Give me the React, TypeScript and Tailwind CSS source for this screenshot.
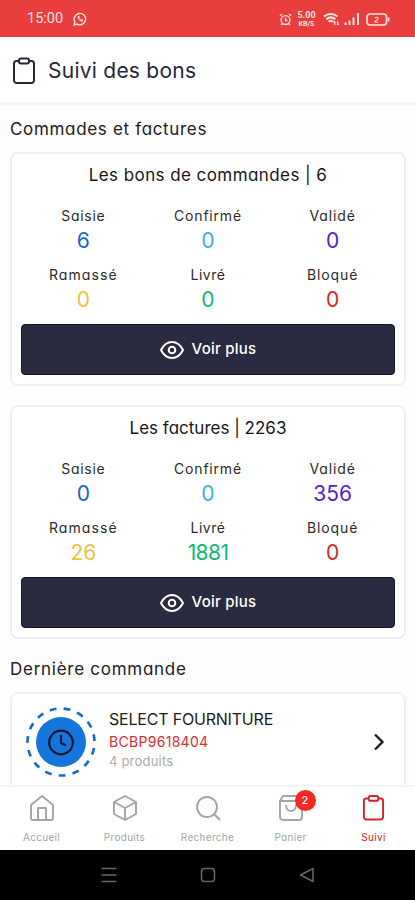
import React from "react";

type Stat = { label: string; value: string; color: string; ls: string };

function Clipboard({ className }: { className: string }) {
  return (
    <svg viewBox="0 0 24 28" fill="none" stroke="currentColor" strokeWidth="2" strokeLinejoin="round" className={className}>
      <path d="M7 4H4.500A2.500 2.500 0 0 0 2 6.500V23.500A2.500 2.500 0 0 0 4.500 26H19.500A2.500 2.500 0 0 0 22 23.500V6.500A2.500 2.500 0 0 0 19.500 4H17" />
      <rect x="7" y="1.500" width="10" height="5" rx="2" />
    </svg>
  );
}

function StatusBar() {
  return (
    <div className="flex h-[37px] shrink-0 items-center bg-[#e93d3e] pl-[27px] pr-[25px] pt-px text-[#ffe3e0]">
      <span className="font-[Roboto] text-[14.500px]">15:00</span>
      <svg viewBox="0 0 16 16" className="ml-[10px] h-[14px] w-[14px]" fill="none" stroke="currentColor" strokeWidth="1.600">
        <path d="M1.200 14.800l1-3.500A6.500 6.500 0 1 1 4.700 13.800z" />
        <path d="M5.600 4.800c-.8 2.200 2.500 6 5.300 5.800l.5-1.500-1.700-.9-.9.800c-.9-.4-1.500-1.100-1.900-1.900l.7-.8-.7-1.600z" fill="currentColor" strokeWidth=".5" />
      </svg>
      <div className="ml-auto flex items-center">
        <svg viewBox="0 0 14 14" className="h-[13px] w-[13px]" fill="none" stroke="currentColor" strokeWidth="1.500">
          <circle cx="7" cy="7.600" r="4.800" />
          <path d="M1 3l2.200-2M13 3l-2.200-2M7 5v3h2M3.500 11.500L2.300 13M10.500 11.500l1.200 1.500" />
        </svg>
        <div className="ml-[5px] flex w-[19px] flex-col items-center font-[Roboto] font-bold">
          <span className="text-[9px] leading-[9px]">5.00</span>
          <span className="text-[7px] leading-[8px]">KB/S</span>
        </div>
        <svg viewBox="0 0 17 14" className="ml-[7px] h-[14px] w-[17px]" fill="none" stroke="currentColor" strokeWidth="2">
          <path d="M1 4.500c4-3.500 9.500-3.500 13.500 0M3.300 7.300c2.700-2.300 6.300-2.300 9 0M5.500 9.800c1.500-1.200 3-1.200 4.500 0" />
          <path d="M11.800 13V9M10.500 10.300L11.800 9M14.500 9v4M15.800 11.700L14.500 13" strokeWidth="1.200" />
        </svg>
        <svg viewBox="0 0 16 12" className="ml-[4px] h-[12px] w-[16px]" fill="currentColor">
          <path d="M.5 9.500h2V12h-2zM4.500 7.500h2V12h-2zM8.500 4.500h2V12h-2zM13 0h2v12h-2z" />
        </svg>
        <svg viewBox="0 0 24 13" className="ml-[6px] h-[13px] w-[24px]" fill="none" stroke="currentColor" strokeWidth="1.700">
          <rect x="1" y="1" width="19.500" height="11" rx="3" />
          <path d="M22.500 4.500v4" strokeWidth="1.800" />
          <path d="M9 5.200c.5-1.500 3-1.200 3 .2C12 6.700 9 7.200 9 9h3.200" strokeWidth="1.100" />
        </svg>
      </div>
    </div>
  );
}

function StatCard({ title, titleClass, stats }: { title: string; titleClass: string; stats: Stat[] }) {
  return (
    <section className="flex h-[234px] shrink-0 flex-col rounded-[8px] border-2 border-[#eeeff0] bg-white px-[9px] pt-[10px]">
      <h3 className={`text-center text-[17px] leading-[22px] text-[#161616] ${titleClass}`}>{title}</h3>
      <div className="mt-[18px] grid grid-cols-3">
        {stats.map((s) => (
          <div key={s.label} className="flex h-[59px] flex-col items-center">
            <span className={`text-[14px] leading-[24px] text-[#2b2b2b] ${s.ls}`}>{s.label}</span>
            <span className={`text-[21px] leading-[26px] ${s.color} ${s.value.length > 3 ? "tracking-[-0.6px]" : ""}`}>{s.value}</span>
          </div>
        ))}
      </div>
      <button className="mt-[2px] flex h-[51px] items-center justify-center gap-[8px] rounded-[4px] border border-[#15152a] bg-[#2a2b41] text-white">
        <svg viewBox="0 0 24 20" className="h-[20px] w-[24px]" fill="none" stroke="currentColor" strokeWidth="2">
          <path d="M1 10C6.500-.7 17.500-.7 23 10C17.500 20.700 6.500 20.700 1 10z" strokeLinejoin="round" />
          <circle cx="12" cy="10" r="3.300" />
        </svg>
        <span className="text-[15px] font-medium tracking-[0.25px]">Voir plus</span>
      </button>
    </section>
  );
}

const makeStats = (v: string[]): Stat[] => [
  { label: "Saisie", value: v[0], color: "text-[#1763d0]", ls: "tracking-[0.7px]" },
  { label: "Confirmé", value: v[1], color: "text-[#3bb2d9]", ls: "tracking-[0.8px]" },
  { label: "Validé", value: v[2], color: "text-[#5520d0]", ls: "tracking-[0.9px]" },
  { label: "Ramassé", value: v[3], color: "text-[#eec23f]", ls: "tracking-[1.1px]" },
  { label: "Livré", value: v[4], color: "text-[#0fb878]", ls: "tracking-[0.5px]" },
  { label: "Bloqué", value: v[5], color: "text-[#d7262c]", ls: "tracking-[0.9px]" },
];

const navIcon = "h-[28px] w-[28px]";

function NavItem({ label, active, children }: { label: string; active?: boolean; children: React.ReactNode }) {
  return (
    <div className={`flex flex-1 flex-col items-center pt-[7px] ${active ? "text-[#d3252b]" : "text-[#a2a5a8]"}`}>
      <div className="relative flex h-[28px] items-center justify-center">{children}</div>
      <span className="mt-[8px] text-[10px] leading-[14px] tracking-[0.3px]">{label}</span>
    </div>
  );
}

export default function App() {
  return (
    <div className="flex h-[900px] w-[415px] flex-col overflow-hidden bg-[#fdfdfd] font-[Inter,'Open_Sans',sans-serif] [font-feature-settings:'cv11'_1]">
      <StatusBar />
      <header className="flex h-[68px] shrink-0 items-center gap-[12px] border-b-[3px] border-[#f6f6f7] bg-white pl-[12px] pt-[2px] text-[#25263a]">
        <Clipboard className="h-[28px] w-[24px]" />
        <h1 className="text-[21px] tracking-[0.25px]">Suivi des bons</h1>
      </header>
      <main className="flex min-h-0 flex-1 flex-col overflow-hidden pl-[10px] pr-[9px]">
        <h2 className="mt-[12px] h-[35px] shrink-0 text-[17px] leading-[24px] tracking-[0.67px] text-[#202020]">Commades et factures</h2>
        <StatCard title="Les bons de commandes | 6" titleClass="tracking-[0.42px]" stats={makeStats(["6", "0", "0", "0", "0", "0"])} />
        <div className="h-[19px] shrink-0" />
        <StatCard title="Les factures | 2263" titleClass="" stats={makeStats(["0", "0", "356", "26", "1881", "0"])} />
        <h2 className="mt-[18px] h-[35px] shrink-0 text-[17px] leading-[24px] tracking-[0.73px] text-[#202020]">Dernière commande</h2>
        <section className="flex h-[110px] shrink-0 rounded-t-[8px] border-2 border-[#eeeff0] bg-white pl-[13px]">
          <svg viewBox="0 0 72 72" className="mt-[12px] h-[72px] w-[72px]" fill="none">
            <circle cx="36" cy="36" r="33.500" stroke="#1269cc" strokeWidth="2.600" strokeDasharray="6.800 7.233" strokeDashoffset="8.100" />
            <circle cx="36" cy="36" r="25" fill="#1476dc" />
            <circle cx="36" cy="36.500" r="11.800" stroke="#10182c" strokeWidth="2.200" />
            <path d="M36 29v8l5 2.500" stroke="#10182c" strokeWidth="2.200" />
          </svg>
          <div className="ml-[12px] mt-[13px] flex flex-col">
            <span className="text-[16px] leading-[24px] tracking-[-0.2px] text-[#1c1c1c]">SELECT FOURNITURE</span>
            <span className="text-[14px] leading-[22px] tracking-[0.3px] text-[#dc2b31]">BCBP9618404</span>
            <span className="text-[13px] leading-[16px] tracking-[0.2px] text-[#aaaaaa]">4 produits</span>
          </div>
          <svg viewBox="0 0 12 18" className="ml-auto mr-[19px] mt-[39px] h-[18px] w-[12px]" fill="none" stroke="#202024" strokeWidth="2.400">
            <path d="M2 1.500L9.500 9L2 16.500" />
          </svg>
        </section>
      </main>
      <nav className="flex h-[65px] shrink-0 border-t-2 border-[#f3f3f4] bg-white">
        <NavItem label="Accueil">
          <svg viewBox="0 0 28 28" className={navIcon} fill="none" stroke="currentColor" strokeWidth="1.900" strokeLinejoin="round">
            <path d="M3 11L14 2L25 11V24a2 2 0 0 1-2 2H5a2 2 0 0 1-2-2zM10 26V14H18V26" />
          </svg>
        </NavItem>
        <NavItem label="Produits">
          <svg viewBox="0 0 28 28" className={navIcon} fill="none" stroke="currentColor" strokeWidth="1.900" strokeLinejoin="round">
            <path d="M14 2L25 8V20L14 26L3 20V8zM3 8L14 14L25 8M14 14V26" />
          </svg>
        </NavItem>
        <NavItem label="Recherche">
          <svg viewBox="0 0 28 28" className={navIcon} fill="none" stroke="currentColor" strokeWidth="1.900">
            <circle cx="13" cy="13" r="10" />
            <path d="M20 20L26 26" />
          </svg>
        </NavItem>
        <NavItem label="Panier">
          <svg viewBox="0 0 28 28" className={navIcon} fill="none" stroke="currentColor" strokeWidth="1.900" strokeLinejoin="round">
            <path d="M3 7L6 2H22L25 7V23a3 3 0 0 1-3 3H6a3 3 0 0 1-3-3zM3 7H25M9 11C9 19 19 19 19 11" />
          </svg>
          <span className="absolute -top-[4px] left-[18px] flex h-[21px] w-[21px] items-center justify-center rounded-full bg-[#f7281e] text-[11px] font-medium text-white">2</span>
        </NavItem>
        <NavItem label="Suivi" active>
          <Clipboard className="h-[28px] w-[23px]" />
        </NavItem>
      </nav>
      <footer className="flex h-[50px] shrink-0 items-center bg-black pl-[101px] text-[#66676a]">
        <svg viewBox="0 0 16 16" className="h-[16px] w-[16px]" stroke="currentColor" strokeWidth="1.700">
          <path d="M.5 1.500h15M.5 8h15M.5 14.500h15" />
        </svg>
        <svg viewBox="0 0 16 16" className="ml-[83px] h-[16px] w-[16px]" fill="none" stroke="currentColor" strokeWidth="1.500">
          <rect x="1.500" y="1.500" width="13" height="13" rx="3" />
        </svg>
        <svg viewBox="0 0 16 16" className="ml-[83px] h-[16px] w-[16px]" fill="none" stroke="currentColor" strokeWidth="1.500" strokeLinejoin="round">
          <path d="M1.500 8L14 1.500V14.500z" />
        </svg>
      </footer>
    </div>
  );
}
